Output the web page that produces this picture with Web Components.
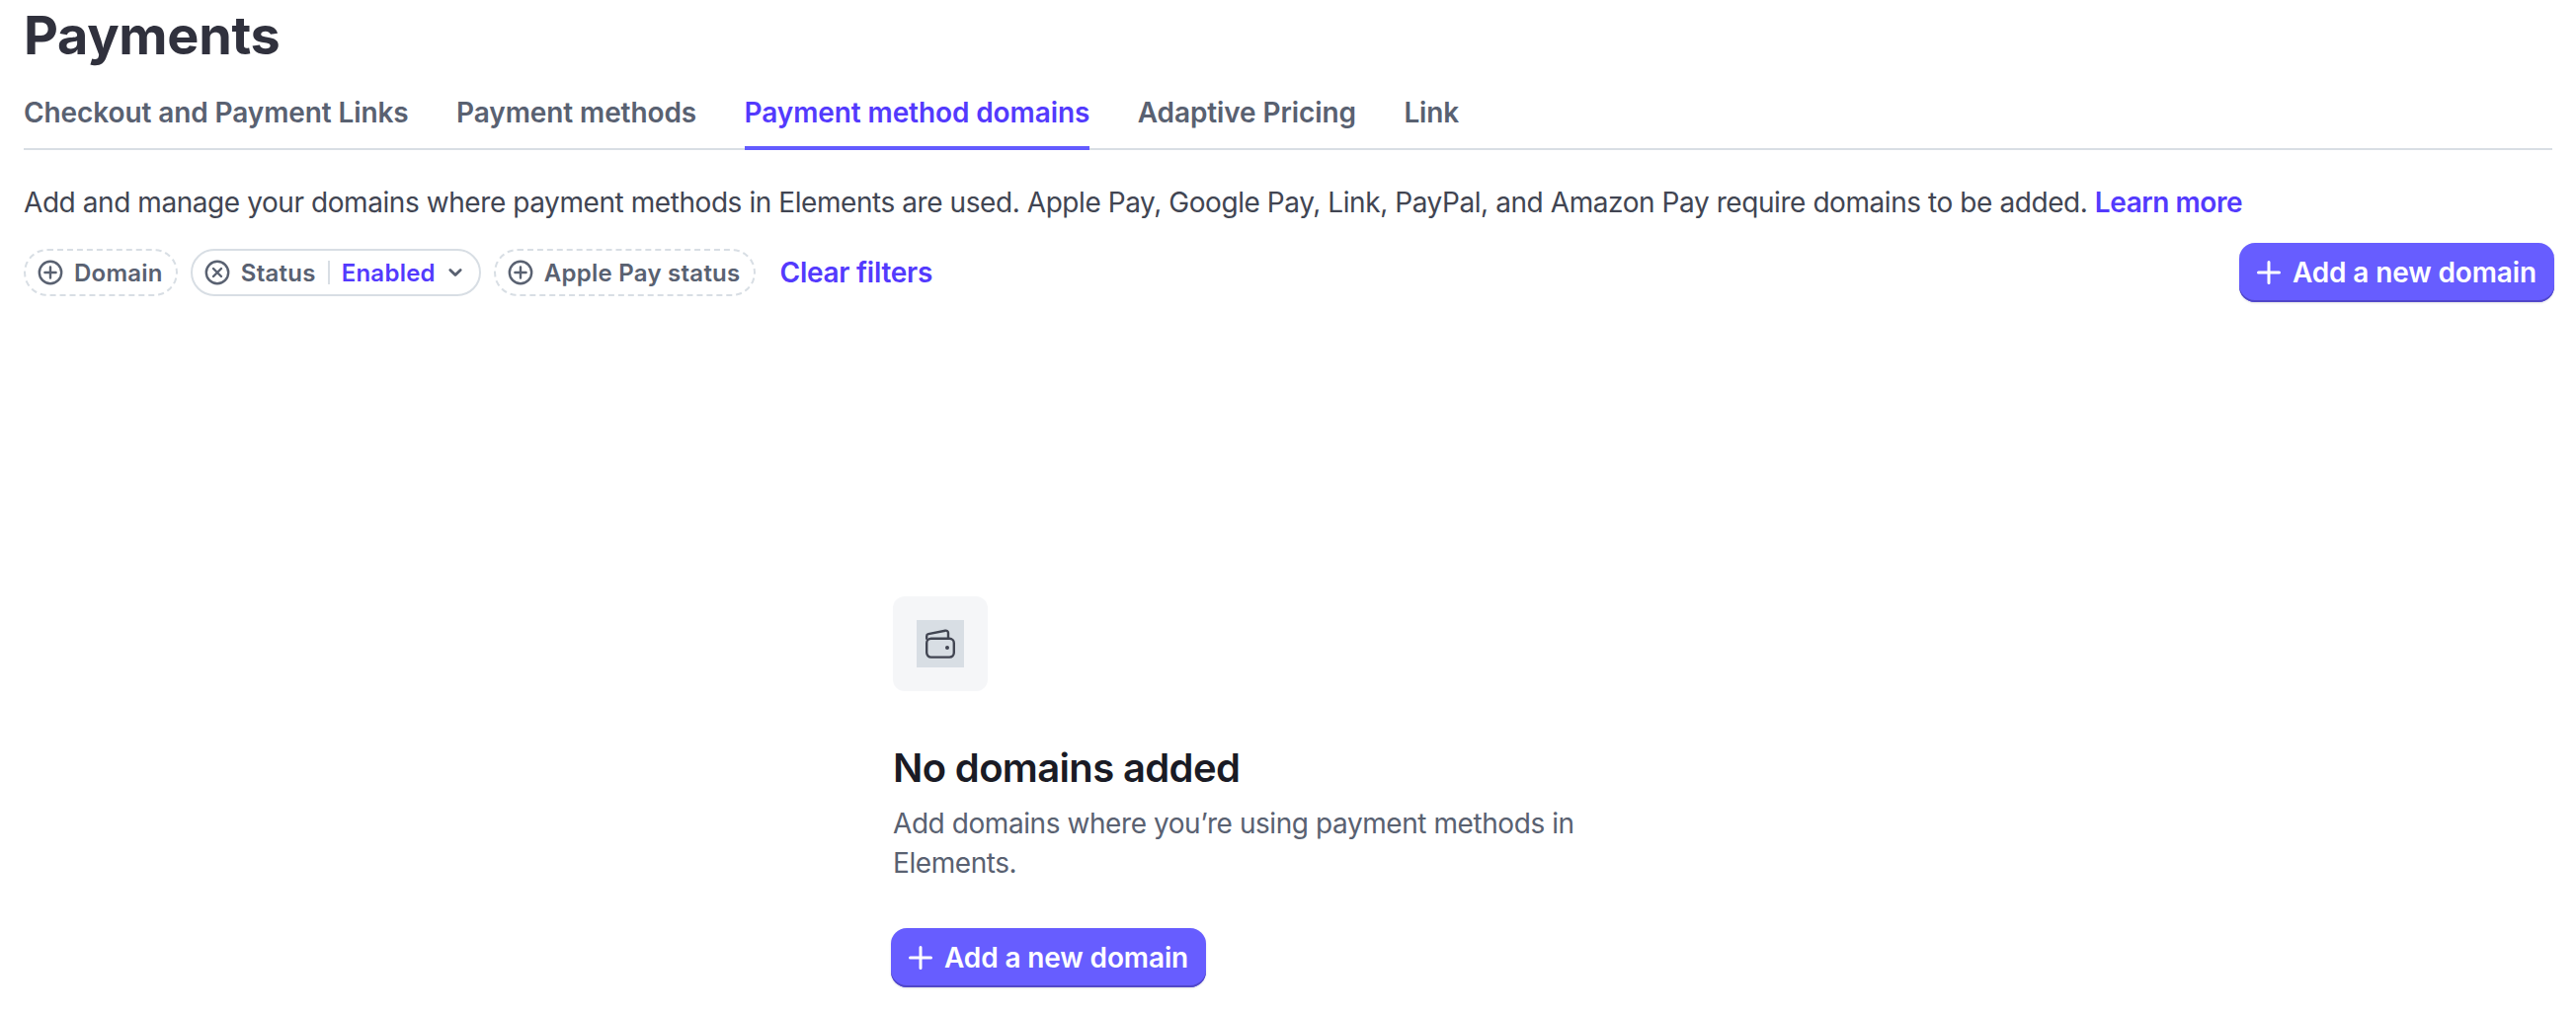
<!DOCTYPE html>
<html lang="en">
<head>
<meta charset="utf-8">
<title>Payments</title>
<style>
  html, body { margin: 0; padding: 0; background: #fff; }
  body { font-family: Inter, "Liberation Sans", sans-serif; color: #414552; width: 2608px; height: 1026px; overflow: hidden; }
</style>
</head>
<body>
<payments-page></payments-page>

<script>
/* ── Shared icons ─────────────────────────────────────────── */
var ICONS = {
  plusCircle: '<svg width="28" height="28" viewBox="0 0 28 28" fill="none" stroke="currentColor" stroke-width="2.4" stroke-linecap="round"><circle cx="14" cy="14" r="11.2"/><path d="M14 8.4v11.2M8.4 14h11.2"/></svg>',
  xCircle: '<svg width="28" height="28" viewBox="0 0 28 28" fill="none" stroke="currentColor" stroke-width="2.4" stroke-linecap="round"><circle cx="14" cy="14" r="11.2"/><path d="M10 10l8 8M18 10l-8 8"/></svg>',
  chevron: '<svg width="20" height="20" viewBox="0 0 20 20" fill="none" stroke="currentColor" stroke-width="2.8" stroke-linecap="round" stroke-linejoin="round"><path d="M4.800 7.400L10 12.600l5.200-5.200"/></svg>',
  plus: '<svg width="24" height="24" viewBox="0 0 24 24" fill="none" stroke="currentColor" stroke-width="3" stroke-linecap="round"><path d="M12 1.500v21M1.500 12h21"/></svg>',
  wallet: '<svg width="32" height="32" viewBox="0 0 32 32" fill="none" stroke="currentColor" stroke-width="2.4" stroke-linecap="round" stroke-linejoin="round"><path d="M2.200 10.800V8.200c0-1 .8-1.800 1.700-2L21 2.700c1.600-.3 3 .8 3 2.300v5.800"/><rect x="2.200" y="10.800" width="27.600" height="18.800" rx="4.500"/><circle cx="23" cy="20" r="2" fill="currentColor" stroke="none"/></svg>'
};

class PaymentTab extends HTMLElement {
  constructor() {
    super();
    this.attachShadow({ mode: "open" });
    this.shadowRoot.innerHTML = `
      <style>
        :host { display: block; height: 68px; font-size: 28px; line-height: 40px; font-weight: 600; letter-spacing: -.1px; color: #596171; white-space: nowrap; box-sizing: border-box; padding-top: 12px; }
        :host([active]) { color: #533afd; height: 70px; border-bottom: 4px solid #635bff; }
      </style>
      <slot></slot>`;
  }
}
customElements.define("payment-tab", PaymentTab);

class PaymentTabs extends HTMLElement {
  constructor() {
    super();
    this.attachShadow({ mode: "open" });
    this.shadowRoot.innerHTML = `
      <style>
        :host { display: flex; gap: 48.5px; height: 80px; box-sizing: border-box; border-bottom: 2px solid #d8dee4; padding-top: 10px; align-items: flex-start; }
      </style>
      <slot></slot>`;
  }
}
customElements.define("payment-tabs", PaymentTabs);

/* Filter pill: dashed when empty, solid with a value when applied */
class FilterPill extends HTMLElement {
  constructor() {
    super();
    this.attachShadow({ mode: "open" });
    var value = this.getAttribute("value");
    this.shadowRoot.innerHTML = `
      <style>
        :host { display: inline-flex; align-items: center; height: 48px; box-sizing: border-box; padding: 0 13px 0 11px; border-radius: 24px; border: 2px dashed #d8dee4; font-size: 24px; font-weight: 600; color: #596171; white-space: nowrap; letter-spacing: .25px; }
        :host([value]) { border-style: solid; padding-right: 14px; }
        .ico { display: flex; margin-right: 10px; color: #596171; }
        .sep { width: 2px; height: 24px; background: #d8dee4; margin: 0 12px; }
        .val { color: #533afd; }
        .chev { display: flex; margin-left: 10px; }
      </style>
      <span class="ico">${value ? ICONS.xCircle : ICONS.plusCircle}</span>
      <span><slot></slot></span>
      ${value ? `<span class="sep"></span><span class="val">${value}</span><span class="chev">${ICONS.chevron}</span>` : ""}`;
  }
}
customElements.define("filter-pill", FilterPill);

class PrimaryButton extends HTMLElement {
  constructor() {
    super();
    this.attachShadow({ mode: "open" });
    this.shadowRoot.innerHTML = `
      <style>
        :host { display: inline-flex; align-items: center; gap: 12px; height: 60px; box-sizing: border-box; padding: 0 18px; border-radius: 16px; background: #675dff; box-shadow: inset 0 -2px 0 #5147c9, 0 1px 2px rgba(64,68,82,.16); color: #fff; font-size: 28px; font-weight: 600; letter-spacing: -.13px; white-space: nowrap; }
        .ico { display: flex; }
      </style>
      <span class="ico">${ICONS.plus}</span>
      <slot></slot>`;
  }
}
customElements.define("primary-button", PrimaryButton);

class EmptyState extends HTMLElement {
  constructor() {
    super();
    this.attachShadow({ mode: "open" });
    this.shadowRoot.innerHTML = `
      <style>
        :host { display: block; width: 720px; }
        .tile { width: 96px; height: 96px; border-radius: 12px; background: #f5f6f8; display: flex; align-items: center; justify-content: center; }
        .glyph { width: 48px; height: 48px; background: #d8dee4; display: flex; align-items: center; justify-content: center; color: #414552; }
        h2 { margin: 50px 0 0; font-size: 40px; line-height: 56px; font-weight: 600; letter-spacing: -.65px; color: #1a1b25; }
        p { margin: 8px 0 0; font-size: 28px; line-height: 40px; letter-spacing: -.43px; color: #596171; }
        .act { margin-top: 46px; margin-left: -2px; }
      </style>
      <div class="tile"><div class="glyph">${ICONS.wallet}</div></div>
      <h2><slot name="title"></slot></h2>
      <p><slot name="body"></slot></p>
      <div class="act"><slot name="action"></slot></div>`;
  }
}
customElements.define("empty-state", EmptyState);

class PaymentsPage extends HTMLElement {
  constructor() {
    super();
    this.attachShadow({ mode: "open" });
    this.shadowRoot.innerHTML = `
      <style>
        :host { display: block; padding: 0 24px; }
        h1 { margin: 0; font-size: 54px; line-height: 72px; font-weight: 700; letter-spacing: -.3px; color: #30313d; }
        .intro { margin: 33px 0 0; font-size: 28px; line-height: 40px; letter-spacing: -.43px; color: #414552; white-space: nowrap; }
        a { color: #533afd; font-weight: 600; text-decoration: none; }
        .filters { display: flex; align-items: center; margin-top: 21px; height: 60px; }
        .pills { display: flex; gap: 13px; align-items: center; }
        .clear { margin-left: 25px; font-size: 28px; letter-spacing: -.25px; }
        .spacer { flex: 1; }
        .right { margin-right: -2px; }
        empty-state { margin-top: 298px; margin-left: 880px; }
      </style>
      <h1>Payments</h1>
      <payment-tabs>
        <payment-tab>Checkout and Payment Links</payment-tab>
        <payment-tab>Payment methods</payment-tab>
        <payment-tab active>Payment method domains</payment-tab>
        <payment-tab>Adaptive Pricing</payment-tab>
        <payment-tab>Link</payment-tab>
      </payment-tabs>
      <p class="intro">Add and manage your domains where payment methods in Elements are used. Apple Pay, Google Pay, Link, PayPal, and Amazon Pay require domains to be added. <a>Learn more</a></p>
      <div class="filters">
        <div class="pills">
          <filter-pill>Domain</filter-pill>
          <filter-pill value="Enabled">Status</filter-pill>
          <filter-pill>Apple Pay status</filter-pill>
        </div>
        <a class="clear">Clear filters</a>
        <span class="spacer"></span>
        <primary-button class="right">Add a new domain</primary-button>
      </div>
      <empty-state>
        <span slot="title">No domains added</span>
        <span slot="body">Add domains where you’re using payment methods in Elements.</span>
        <primary-button slot="action">Add a new domain</primary-button>
      </empty-state>`;
  }
}
customElements.define("payments-page", PaymentsPage);
</script>
</body>
</html>
